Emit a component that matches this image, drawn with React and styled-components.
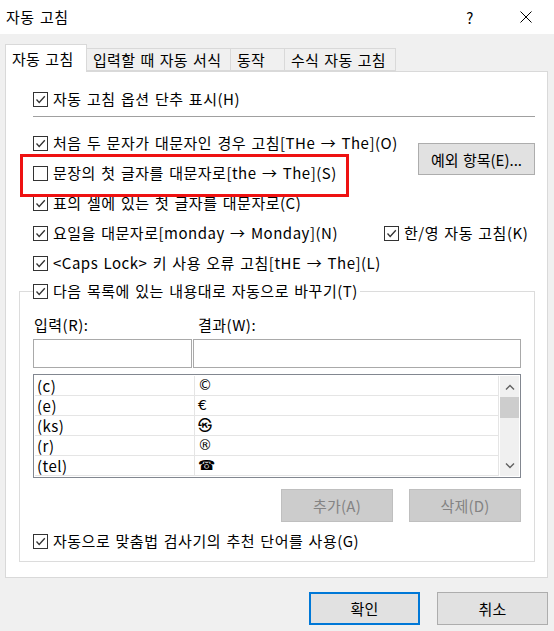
import styled, { createGlobalStyle } from "styled-components";

const GlobalStyle = createGlobalStyle`
  html, body {
    margin: 0;
    padding: 0;
  }
  body {
    background: #f0f0f0;
    font-family: "Noto Sans CJK KR", "Noto Sans", sans-serif;
    font-size: 15px;
    letter-spacing: 0.5px;
    word-spacing: 1.5px;
    color: #000;
  }
  * {
    box-sizing: border-box;
  }
`;

const tabs = [
  { label: "자동 고침", width: 82, active: true },
  { label: "입력할 때 자동 서식", width: 145 },
  { label: "동작", width: 55 },
  { label: "수식 자동 고침", width: 112 },
];

const entries = [
  ["(c)", "©"],
  ["(e)", "€"],
  ["(ks)", "㉿"],
  ["(r)", "®"],
  ["(tel)", "☎"],
];

const CheckBox = ({ checked }) => (
  <Box>
    {checked && (
      <svg width="13" height="13" viewBox="0 0 13 13">
        <polyline
          points="2.5,6.5 5.2,9.5 10.8,3.2"
          fill="none"
          stroke="#333"
          strokeWidth="1.3"
        />
      </svg>
    )}
  </Box>
);

const Option = ({ checked, children }) => (
  <CheckRow>
    <CheckBox checked={checked} />
    <span>{children}</span>
  </CheckRow>
);

const Chevron = ({ up }) => (
  <svg width="10" height="6" viewBox="0 0 10 6">
    <polyline
      points={up ? "1,5.5 5,1.5 9,5.5" : "1,0.5 5,4.5 9,0.5"}
      fill="none"
      stroke="#606060"
      strokeWidth="1.4"
    />
  </svg>
);

const App = () => {
  return (
    <Window>
      <GlobalStyle />
      <TitleBar>
        <Title>자동 고침</Title>
        <CaptionButton>?</CaptionButton>
        <CaptionButton>
          <svg width="12" height="12" viewBox="0 0 12 12">
            <path d="M0.5 0.5 L11.5 11.5 M11.5 0.5 L0.5 11.5" stroke="#000" strokeWidth="1" />
          </svg>
        </CaptionButton>
      </TitleBar>
      <Body>
        <TabStrip>
          {tabs.map((t) => (
            <Tab key={t.label} $width={t.width} $active={t.active}>
              {t.label}
            </Tab>
          ))}
        </TabStrip>
        <Panel>
          <Options>
            <Option checked>자동 고침 옵션 단추 표시(H)</Option>
            <Separator />
            <OptionList>
              <TopOptions>
                <OptionColumn>
                  <Option checked>처음 두 문자가 대문자인 경우 고침[THe → The](O)</Option>
                  <Highlighted>
                    <Option>문장의 첫 글자를 대문자로[the → The](S)</Option>
                  </Highlighted>
                </OptionColumn>
                <ExceptionButton>예외 항목(E)...</ExceptionButton>
              </TopOptions>
              <Option checked>표의 셀에 있는 첫 글자를 대문자로(C)</Option>
              <SplitRow>
                <Option checked>요일을 대문자로[monday → Monday](N)</Option>
                <Option checked>한/영 자동 고침(K)</Option>
              </SplitRow>
              <Option checked>&lt;Caps Lock&gt; 키 사용 오류 고침[tHE → The](L)</Option>
            </OptionList>
          </Options>
          <Group>
            <Legend>
              <Option checked>다음 목록에 있는 내용대로 자동으로 바꾸기(T)</Option>
            </Legend>
            <FieldGrid>
              <FieldLabel $indent={1}>입력(R):</FieldLabel>
              <FieldLabel $indent={5}>결과(W):</FieldLabel>
              <TextBox />
              <TextBox />
            </FieldGrid>
            <ListBox>
              <Grid>
                {entries.map(([from, to]) => (
                  <GridRow key={from}>
                    <Cell $pad={2} $divider>
                      {from}
                    </Cell>
                    <SymbolCell>{to}</SymbolCell>
                  </GridRow>
                ))}
              </Grid>
              <ScrollBar>
                <ScrollArrow>
                  <Chevron up />
                </ScrollArrow>
                <Thumb />
                <Track />
                <ScrollArrow>
                  <Chevron />
                </ScrollArrow>
              </ScrollBar>
            </ListBox>
            <ActionRow>
              <Button $width={112} disabled>
                추가(A)
              </Button>
              <Button $width={112} disabled>
                삭제(D)
              </Button>
            </ActionRow>
            <LastOption>
              <Option checked>자동으로 맞춤법 검사기의 추천 단어를 사용(G)</Option>
            </LastOption>
          </Group>
        </Panel>
        <Footer>
          <Button $width={111} $primary>
            확인
          </Button>
          <Button $width={111}>취소</Button>
        </Footer>
      </Body>
    </Window>
  );
};

const Window = styled.div`
  width: 554px;
  height: 631px;
  display: flex;
  flex-direction: column;
  overflow: hidden;
`;

const TitleBar = styled.div`
  height: 34px;
  background: #fff;
  display: flex;
  align-items: center;
  padding-left: 6px;
`;

const Title = styled.div`
  flex: 1;
  line-height: 20px;
`;

const CaptionButton = styled.div`
  width: 56px;
  height: 34px;
  display: flex;
  align-items: center;
  justify-content: center;
  font-size: 15px;
`;

const Body = styled.div`
  flex: 1;
  display: flex;
  flex-direction: column;
  padding: 10px 6px 6px 5px;
`;

const TabStrip = styled.div`
  display: flex;
  align-items: flex-end;
  height: 27px;
`;

const Tab = styled.div`
  position: relative;
  width: ${(p) => p.$width}px;
  height: ${(p) => (p.$active ? 28 : 23)}px;
  margin-bottom: ${(p) => (p.$active ? -1 : 0)}px;
  margin-left: -1px;
  padding-left: 6px;
  display: flex;
  align-items: center;
  white-space: nowrap;
  letter-spacing: 0.3px;
  background: ${(p) => (p.$active ? "#fff" : "#f0f0f0")};
  border: 1px solid #d9d9d9;
  border-bottom: ${(p) => (p.$active ? "none" : "1px solid #d9d9d9")};
  z-index: ${(p) => (p.$active ? 2 : 1)};
  padding-bottom: ${(p) => (p.$active ? 1 : 0)}px;

  &:first-child {
    margin-left: 0;
  }
`;

const Panel = styled.div`
  background: #fff;
  border: 1px solid #d9d9d9;
  padding: 17px 12px 15px 13px;
  display: flex;
  flex-direction: column;
`;

const Options = styled.div`
  display: flex;
  flex-direction: column;
  padding-left: 14px;
`;

const Separator = styled.div`
  height: 1px;
  background: #a0a0a0;
  margin: 7px 0 16px;
`;

const OptionList = styled.div`
  display: flex;
  flex-direction: column;
  gap: 10px;
`;

const TopOptions = styled.div`
  display: flex;
  align-items: flex-start;
`;

const OptionColumn = styled.div`
  display: flex;
  flex-direction: column;
  gap: 10px;
  flex: 1;
`;

const Highlighted = styled.div`
  position: relative;

  &::after {
    content: "";
    position: absolute;
    left: -13px;
    top: -9px;
    width: 323px;
    height: 37px;
    border: 3px solid #ee1111;
    pointer-events: none;
  }
`;

const SplitRow = styled.div`
  display: grid;
  grid-template-columns: 351px 1fr;
`;

const CheckRow = styled.div`
  display: flex;
  align-items: center;
  gap: 5px;
  height: 20px;
  line-height: 20px;
  white-space: nowrap;
`;

const Box = styled.div`
  width: 15px;
  height: 15px;
  flex: none;
  border: 1px solid #333;
  background: #fff;
  display: flex;
  align-items: center;
  justify-content: center;
`;

const ExceptionButton = styled.div`
  width: 117px;
  height: 32px;
  margin-top: 10px;
  background: #e1e1e1;
  border: 1px solid #adadad;
  display: flex;
  align-items: center;
  justify-content: center;
  white-space: nowrap;
  letter-spacing: 0;
  word-spacing: 1px;
`;

const Group = styled.fieldset`
  margin: 8px 0 0;
  padding: 0 13px 10px;
  border: 1px solid #dcdcdc;
  min-width: 0;
`;

const Legend = styled.legend`
  padding: 0 2px 0 0;
  margin: 0;
  background: #fff;
`;

const FieldGrid = styled.div`
  display: grid;
  grid-template-columns: 159px 1fr;
  column-gap: 1px;
  row-gap: 4px;
  padding-top: 14px;
`;

const FieldLabel = styled.div`
  height: 20px;
  line-height: 20px;
  padding-left: ${(p) => p.$indent}px;
`;

const TextBox = styled.div`
  height: 29px;
  border: 1px solid #a9a9a9;
  background: #fff;
`;

const ListBox = styled.div`
  margin-top: 6px;
  height: 104px;
  border: 1px solid #828790;
  padding: 1px;
  display: flex;
  gap: 1px;
  overflow: hidden;
`;

const Grid = styled.div`
  flex: 1;
  display: flex;
  flex-direction: column;
  border-right: 1px solid #e5e5e5;
`;

const GridRow = styled.div`
  display: grid;
  grid-template-columns: 160px 1fr;
  height: 20px;
  flex: none;
  border-bottom: 1px solid #e5e5e5;
`;

const Cell = styled.div`
  padding-left: ${(p) => p.$pad}px;
  line-height: 19px;
  border-right: ${(p) => (p.$divider ? "1px solid #e5e5e5" : "none")};
`;

const SymbolCell = styled.div`
  padding-left: 3px;
  line-height: 19px;
  font-family: "DejaVu Sans", "Noto Sans CJK KR", sans-serif;
  font-size: 14px;
`;

const ScrollBar = styled.div`
  width: 19px;
  flex: none;
  background: #f0f0f0;
  display: flex;
  flex-direction: column;
`;

const ScrollArrow = styled.div`
  height: 21px;
  flex: none;
  display: flex;
  align-items: center;
  justify-content: center;
`;

const Thumb = styled.div`
  height: 21px;
  flex: none;
  background: #cdcdcd;
`;

const Track = styled.div`
  flex: 1;
`;

const ActionRow = styled.div`
  display: flex;
  justify-content: flex-end;
  gap: 16px;
  margin-top: 11px;
`;

const LastOption = styled.div`
  margin-top: 9px;
`;

const Button = styled.div`
  width: ${(p) => p.$width}px;
  height: 33px;
  display: flex;
  align-items: center;
  justify-content: center;
  white-space: nowrap;
  letter-spacing: 0.2px;
  background: ${(p) => (p.disabled ? "#cccccc" : "#e1e1e1")};
  color: ${(p) => (p.disabled ? "#838383" : "#000")};
  border: ${(p) =>
    p.$primary ? "2px solid #0078d7" : p.disabled ? "1px solid #bfbfbf" : "1px solid #adadad"};
`;

const Footer = styled.div`
  display: flex;
  justify-content: flex-end;
  gap: 17px;
  margin-top: 14px;
`;

export default App;
